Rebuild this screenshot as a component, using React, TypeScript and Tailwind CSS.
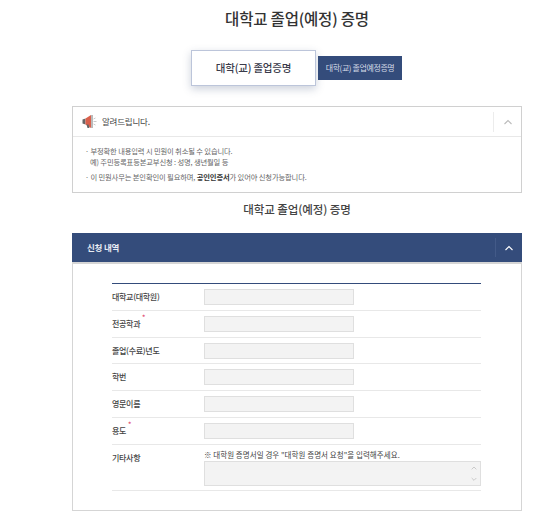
const FONT = { fontFamily: '"Noto Sans CJK KR", "Noto Sans", sans-serif' };

function Row({ label, star, short }: { label: string; star?: string; short?: boolean }) {
  return (
    <div className={`flex items-center border-b border-[#e8e8e8] ${short ? "h-[26px]" : "h-[27px]"}`}>
      <div className="w-[92px] text-[8px] font-medium tracking-[-0.3px] text-[#444]">
        <span className="relative">
          {label}
          {star && <span className={`absolute top-[-6px] text-[7px] text-[#e0406a] ${star}`}>*</span>}
        </span>
      </div>
      <div className="h-[16px] w-[150px] border border-[#dfdfdf] bg-[#f3f3f3]" />
    </div>
  );
}

function Chevron({ color, size = 12 }: { color: string; size?: number }) {
  return (
    <svg width={size} height={size} viewBox="0 0 12 12" fill="none" stroke={color} strokeWidth="1.1">
      <path d="M2.5 8 L6 4.5 L9.5 8" />
    </svg>
  );
}

export default function App() {
  return (
    <div className="h-[520px] w-[546px] overflow-hidden bg-white text-[#333]" style={FONT}>
      <h1 className="ml-[72px] flex h-[50px] w-[450px] items-start justify-center pt-[7px] text-[15.5px] font-medium leading-[22px] tracking-[-0.2px] text-[#333]">
        대학교 졸업(예정) 증명
      </h1>

      <div className="ml-[191px] flex h-[36px] items-center gap-[2px]">
        <div className="flex h-[36px] w-[125px] items-center justify-center border border-[#bcc5da] bg-white text-[10.5px] font-medium tracking-[-0.2px] text-[#3a3a4a] shadow-[0_3px_8px_rgba(50,70,110,0.25)]">
          대학(교) 졸업증명
        </div>
        <div className="flex h-[24px] w-[84px] items-center justify-center bg-[#344c7b] text-[8px] tracking-[-0.4px] text-[#d5dbe8]">
          대학(교) 졸업예정증명
        </div>
      </div>

      <section className="ml-[72px] mt-[20px] h-[87px] w-[450px] border border-[#d0d0d0]">
        <div className="flex h-[30px] items-center border-b border-[#e8e8e8] pl-[9px]">
          <svg width="15" height="15" viewBox="0 0 15 15" className="mr-[5px]">
            <path d="M0.5 5.5 L3.5 4.5 L3.5 10.5 L0.5 9.5 Z" fill="#666" />
            <path d="M3.5 4.5 L9 1 L9 14 L3.5 10.5 Z" fill="#d9604c" />
            <path d="M4.5 10.5 L6.5 10.5 L7.5 14 L5.5 14 Z" fill="#666" />
            <path d="M10 1 L10 14" stroke="#777" strokeWidth="1" />
            <path d="M11.5 5 L13.5 4 M11.5 7.5 L14.5 7.5 M11.5 10 L13.5 11" stroke="#bbb" strokeWidth="0.8" />
          </svg>
          <span className="text-[8.5px] tracking-[-0.2px] text-[#444]">알려드립니다.</span>
          <div className="ml-auto flex h-[20px] w-[28px] items-center justify-center border-l border-[#ececec]">
            <Chevron color="#bbb" />
          </div>
        </div>
        <div className="px-[12px] pt-[9px] text-[7.3px] leading-[11px] tracking-[-0.15px] text-[#666]">
          <p>· 부정확한 내용입력 시 민원이 취소될 수 있습니다.</p>
          <p className="pl-[5px]">예) 주민등록표등본교부신청 : 성명, 생년월일 등</p>
          <p className="mt-[4px]">
            · 이 민원사무는 본인확인이 필요하며, <b className="font-bold text-[#333]">공인인증서</b>가 있어야 신청가능합니다.
          </p>
        </div>
      </section>

      <h2 className="ml-[72px] mt-[8px] flex h-[18px] w-[450px] items-center justify-center text-[11.5px] font-medium tracking-[-0.1px] text-[#444]">
        대학교 졸업(예정) 증명
      </h2>

      <section className="ml-[72px] mt-[14px] w-[450px]">
        <div className="flex h-[29px] items-center bg-[#344c7b] pl-[15px]">
          <span className="text-[8.5px] font-bold tracking-[-0.2px] text-[#e8ecf4]">신청 내역</span>
          <div className="ml-auto flex h-[19px] w-[27px] items-center justify-center border-l border-[#435a88]">
            <Chevron color="#ffffff" />
          </div>
        </div>
        <div className="h-[249px] border border-t-2 border-[#d5d5d5] px-[39px] pt-[19px]">
          <div className="w-[369px] border-t border-[#344c7b]">
            <Row label="대학교(대학원)" />
            <Row label="전공학과" star="left-[30px]" />
            <Row label="졸업(수료)년도" short />
            <Row label="학번" />
            <Row label="영문이름" />
            <Row label="용도" star="left-[16px]" />
            <div className="flex h-[46px] border-b border-[#e8e8e8]">
              <div className="w-[92px] pt-[7px] text-[8px] font-medium tracking-[-0.3px] text-[#444]">기타사항</div>
              <div className="flex-1">
                <p className="h-[16px] pt-[4px] text-[7.5px] leading-[11px] tracking-[0.05px] text-[#444]">
                  ※ 대학원 증명서일 경우 "대학원 증명서 요청"을 입력해주세요.
                </p>
                <div className="flex h-[25px] w-[277px] justify-end border border-[#dfdfdf] bg-[#f3f3f3]">
                  <div className="flex w-[12px] flex-col items-center justify-between py-[2px]">
                    <Chevron color="#bbb" size={8} />
                    <svg width="8" height="8" viewBox="0 0 12 12" fill="none" stroke="#bbb" strokeWidth="1.1">
                      <path d="M2.5 4.5 L6 8 L9.5 4.5" />
                    </svg>
                  </div>
                </div>
              </div>
            </div>
          </div>
        </div>
      </section>
    </div>
  );
}
